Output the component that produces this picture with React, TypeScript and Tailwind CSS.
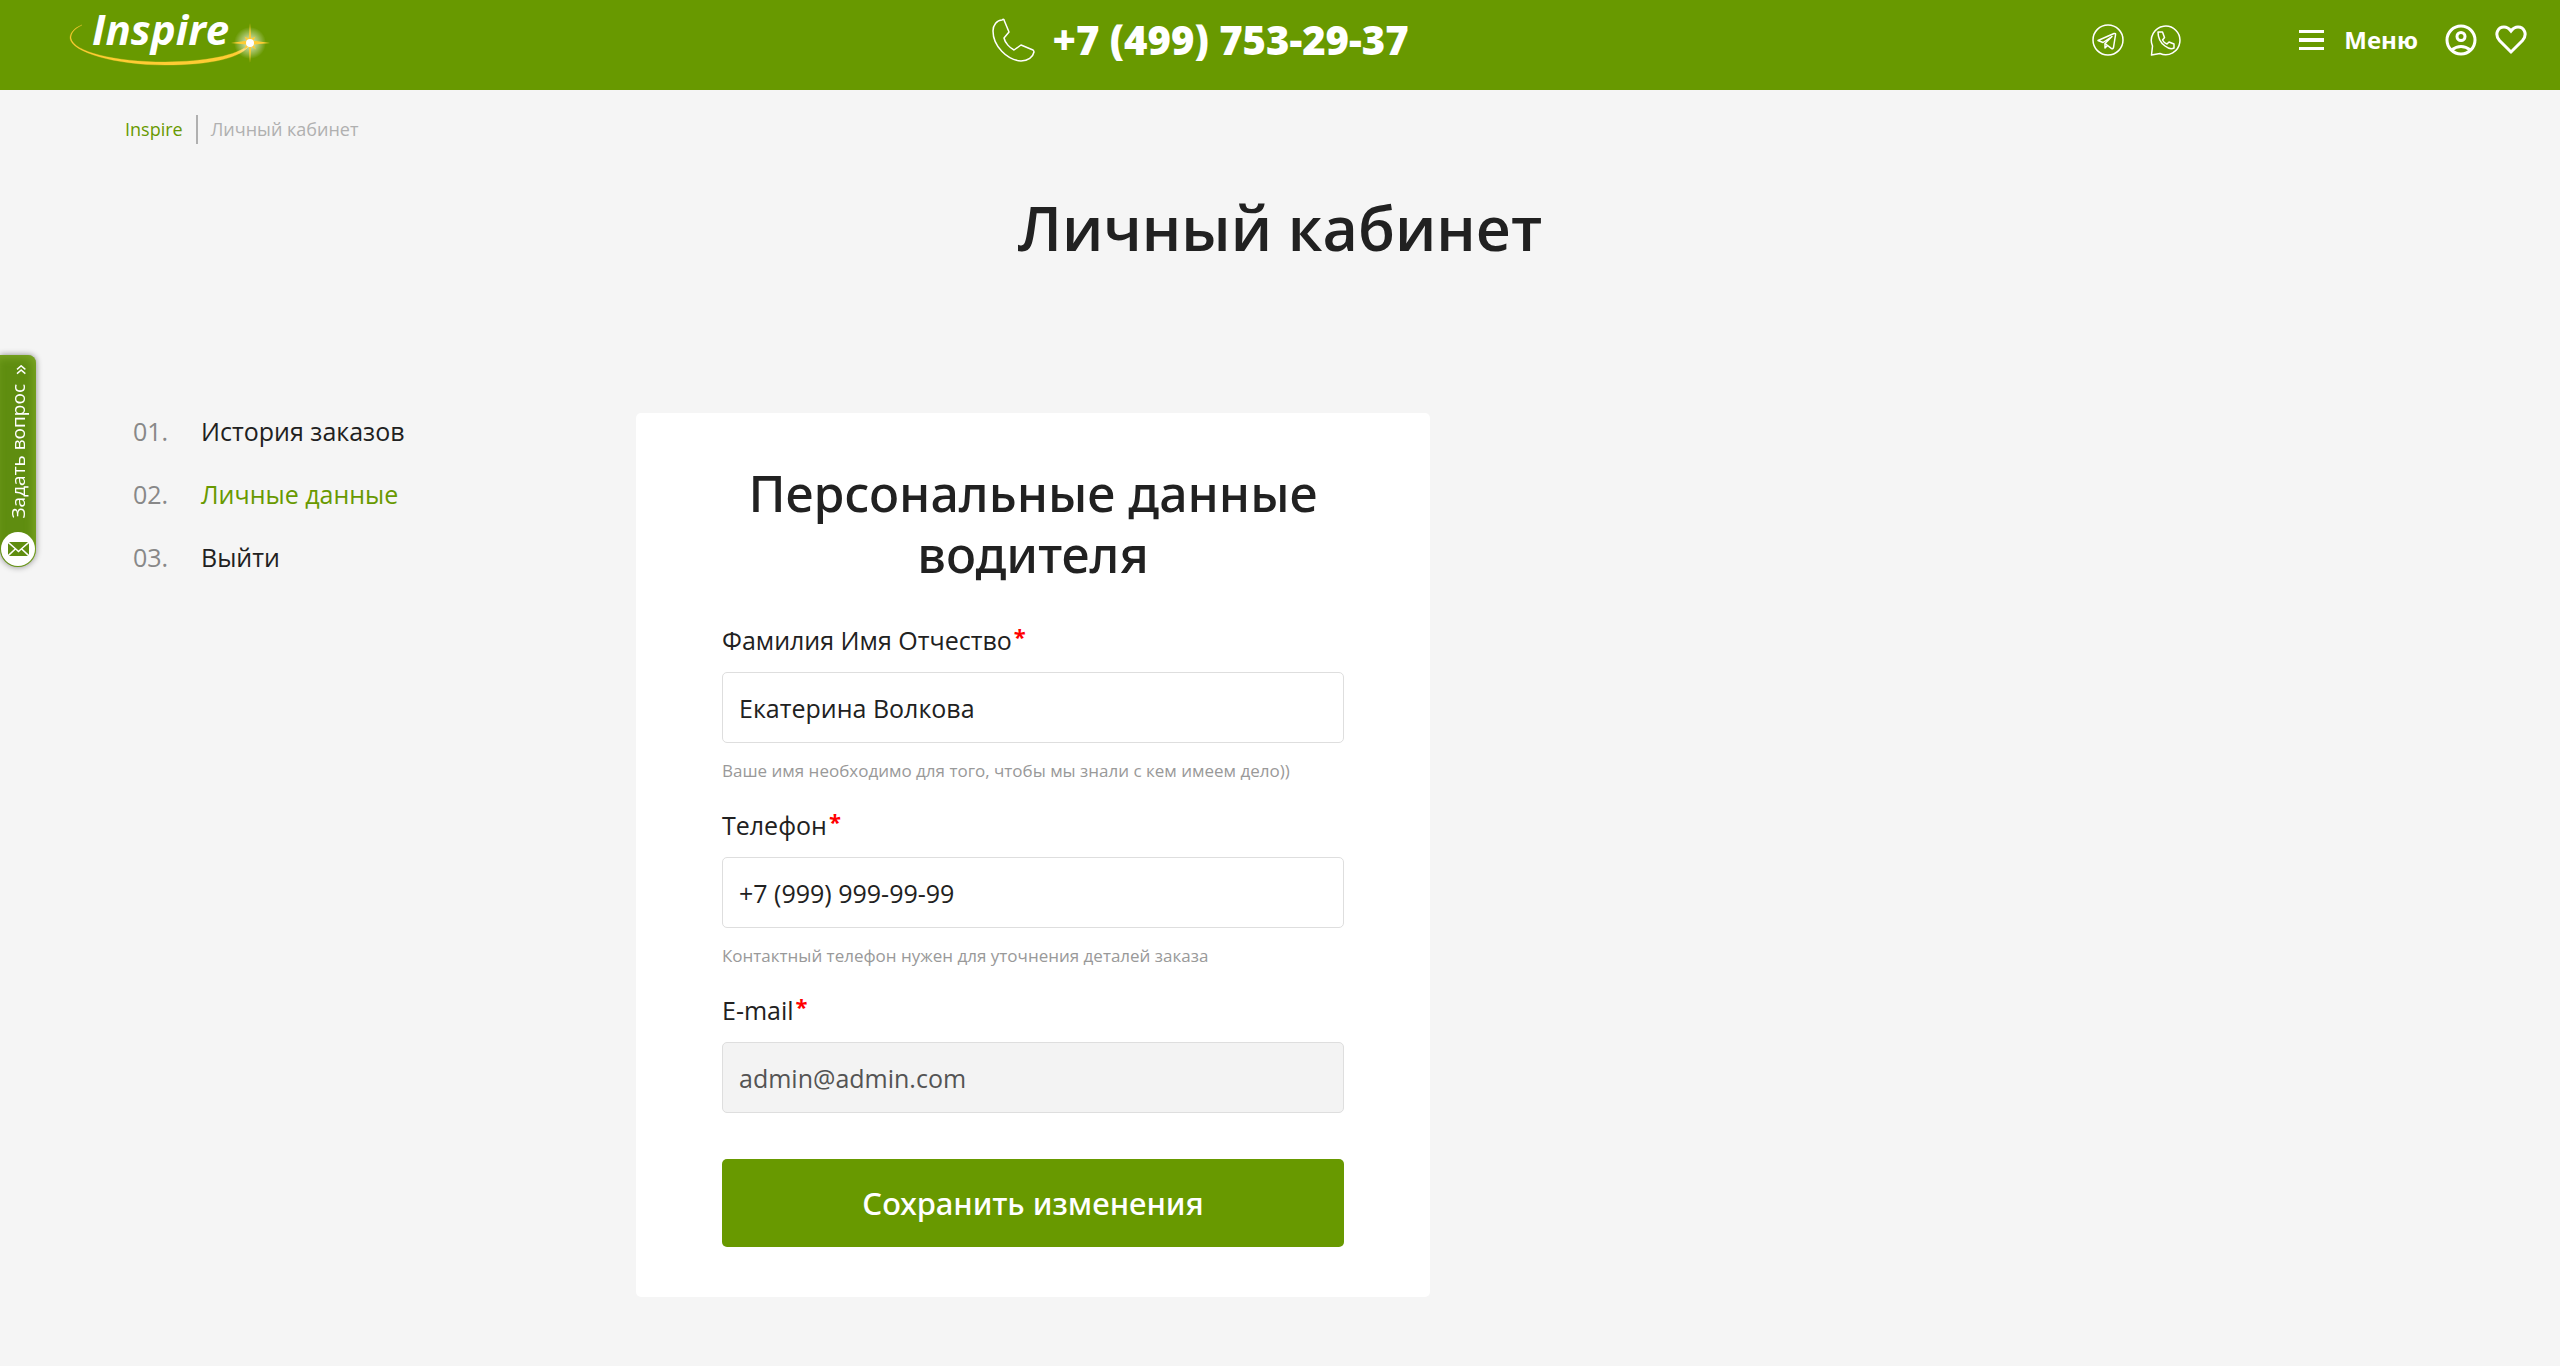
import { useState } from "react";

type MenuItem = { label: string; href: string; active?: boolean };

const menu: MenuItem[] = [
  { label: "История заказов", href: "#orders" },
  { label: "Личные данные", href: "#profile", active: true },
  { label: "Выйти", href: "#logout" },
];

export default function App() {
  return (
    <div className="min-h-screen bg-[#f5f5f5] font-['Open_Sans',sans-serif] text-[#212121]">
      <Header />
      <AskTab />

      <main className="px-[125px] pb-[68px]">
        <nav aria-label="Хлебные крошки" className="flex h-[78px] items-center text-[18px] leading-[29px]">
          <a href="#home" className="text-[#689900]">Inspire</a>
          <span className="ml-[13px] border-l-2 border-[#b0b0b0] pl-[13px] text-[#b0b0b0]">Личный кабинет</span>
        </nav>

        <h1 className="mt-[18px] text-center text-[61px] leading-[84px] font-semibold">Личный кабинет</h1>

        <div className="mt-[143px] grid grid-cols-[511fr_794fr_1005fr] items-start">
          <aside className="pl-2">
            <ol className="flex flex-col gap-[27px] text-[25px] leading-[36px]">
              {menu.map((item, i) => (
                <li key={item.href} className="flex">
                  <span className="w-[68px] text-[#888]">{`0${i + 1}.`}</span>
                  <a href={item.href} className={item.active ? "text-[#689900]" : undefined}>
                    {item.label}
                  </a>
                </li>
              ))}
            </ol>
          </aside>
          <ProfileForm />
        </div>
      </main>
    </div>
  );
}

function Header() {
  return (
    <header className="grid h-[90px] grid-cols-[960fr_415fr_1119fr] items-start bg-[#689900] px-[33px] text-white">
      <a href="#home" aria-label="Inspire" className="ml-[32px] justify-self-start">
        <Logo />
      </a>

      <a href="tel:+74997532937" className="flex h-[80px] items-center gap-4 text-[40px] font-extrabold whitespace-nowrap">
        <PhoneIcon />
        +7 (499) 753-29-37
      </a>

      <div className="flex h-[80px] items-center justify-end">
        <a href="#telegram" aria-label="Telegram"><TelegramIcon /></a>
        <a href="#whatsapp" aria-label="WhatsApp" className="ml-[26px]"><WhatsappIcon /></a>
        <button type="button" className="ml-[117px] flex items-center gap-5 text-[24px] font-bold">
          <svg width="25" height="20" viewBox="0 0 25 20" fill="currentColor">
            <path d="M0 0h25v3H0zM0 8h25v4H0zM0 17h25v3H0z" />
          </svg>
          Меню
        </button>
        <a href="#profile" aria-label="Профиль" className="ml-[27px]"><UserIcon /></a>
        <a href="#favorites" aria-label="Избранное" className="ml-[18px]"><HeartIcon /></a>
      </div>
    </header>
  );
}

function AskTab() {
  return (
    <button
      type="button"
      className="fixed top-[355px] left-0 flex h-[212px] w-[36px] flex-col items-center rounded-tr-lg rounded-b-[18px] bg-[#5f8d10] pt-[9px] pb-px text-white shadow-[0_0_6px_rgba(0,0,0,0.45),inset_-3px_3px_8px_rgba(140,180,50,0.6)]"
    >
      <span className="rotate-180 text-[22px] leading-[24px] [writing-mode:vertical-rl]">»</span>
      <span className="mt-[9px] rotate-180 text-[19px] leading-[24px] [writing-mode:vertical-rl]">Задать вопрос</span>
      <span className="mt-auto flex size-[34px] items-center justify-center rounded-full bg-white text-[#5f8d10]">
        <svg width="21" height="14" viewBox="0 0 21 14" fill="currentColor">
          <path d="M1 0h19l-9.500 8.500zM0 1.200l6.500 5.600L0 12.800zM21 1.200l-6.500 5.600 6.500 6zM7.600 7.800l2.900 2.600 2.900-2.600L20 14H1z" />
        </svg>
      </span>
    </button>
  );
}

function ProfileForm() {
  const [name, setName] = useState("Екатерина Волкова");
  const [phone, setPhone] = useState("+7 (999) 999-99-99");

  return (
    <form
      className="flex flex-col rounded-[5px] bg-white px-[86px] py-[50px]"
      onSubmit={(e) => e.preventDefault()}
    >
      <h2 className="mb-[13px] text-center font-['Noto_Sans',sans-serif] text-[50px] leading-[61px] font-medium">
        Персональные данные водителя
      </h2>

      <Field
        id="name"
        label="Фамилия Имя Отчество"
        value={name}
        onChange={setName}
        hint="Ваше имя необходимо для того, чтобы мы знали с кем имеем дело))"
      />
      <Field
        id="phone"
        label="Телефон"
        value={phone}
        onChange={setPhone}
        hint="Контактный телефон нужен для уточнения деталей заказа"
      />
      <Field id="email" label="E-mail" value="admin@admin.com" disabled />

      <button
        type="submit"
        className="mt-[46px] h-[88px] rounded-[5px] bg-[#689900] font-['Noto_Sans',sans-serif] text-[31px] font-medium text-white"
      >
        Сохранить изменения
      </button>
    </form>
  );
}

type FieldProps = {
  id: string;
  label: string;
  value: string;
  hint?: string;
  disabled?: boolean;
  onChange?: (value: string) => void;
};

function Field({ id, label, value, hint, disabled, onChange }: FieldProps) {
  return (
    <div className="flex flex-col pt-[24px]">
      <label htmlFor={id} className="flex items-start gap-[2px] text-[25px] leading-[36px]">
        {label}
        <span className="text-[22px] leading-[28px] font-bold text-[#f00]">*</span>
      </label>
      <input
        id={id}
        value={value}
        disabled={disabled}
        onChange={(e) => onChange?.(e.target.value)}
        className="mt-[14px] h-[71px] w-full rounded-[5px] border border-[#dedede] bg-white px-4 text-[25px] disabled:bg-[#f3f3f3] disabled:text-[#545454]"
      />
      {hint && <p className="mt-[16px] text-[17px] leading-[24px] text-[#999]">{hint}</p>}
    </div>
  );
}

function Logo() {
  return (
    <svg width="210" height="75" viewBox="0 0 210 75">
      <defs>
        <radialGradient id="glow">
          <stop offset="0" stopColor="#fff" />
          <stop offset="0.300" stopColor="#fff" stopOpacity="0.600" />
          <stop offset="1" stopColor="#fff" stopOpacity="0" />
        </radialGradient>
      </defs>
      <text x="27" y="45" fill="#fff" className="font-['Open_Sans',sans-serif] text-[42px] font-bold italic">
        Inspire
      </text>
      <path
        d="M17 25C9 28 5 33 5 38C6 52 50 65 100 65C145 65 178 58 185 44C172 56 140 61.500 100 62C50 62 8 52 6 38C6 33 9 29 17 25Z"
        fill="#ffcc33"
        stroke="#ffcc33"
        strokeWidth="0.300"
      />
      <circle cx="185" cy="43" r="16" fill="url(#glow)" />
      <path
        d="M185 23l1.200 15.500 4.300-2-2 4.300 16.500 2.200-16.500 1.500 2.500 5-4.800-3L185 63l-1.200-16.500-4.800 3 2.500-5L166 43l15.500-2.200-2-4.300 4.300 2z"
        fill="#ffcc33"
      />
      <circle cx="185" cy="43" r="4" fill="#fff" />
    </svg>
  );
}

function PhoneIcon() {
  return (
    <svg className="shrink-0" width="44" height="44" viewBox="0 0 44 44" fill="none" stroke="currentColor" strokeWidth="1.500" strokeLinejoin="round">
      <path d="M10 2C5 2 1 7 1 13C1 28 15 42 29 43C36 43 41 39 42 34C42 33 42 33 41 32L29 27L22 32C18 30 13 25 12 20L17 14L12 2C12 1 11 1 10 2Z" />
    </svg>
  );
}

function TelegramIcon() {
  return (
    <svg width="32" height="32" viewBox="0 0 32 32" fill="none" stroke="currentColor" strokeWidth="1.500" strokeLinejoin="round">
      <circle cx="16" cy="16" r="15" />
      <path d="M6 16.500L22 9.500Q24 9 23.500 11L21.500 23.500Q21 25.500 19.300 24.300L13 19.500L20 12.500L11 18.500Z" />
      <path d="M13 19.500V24L15.500 21.500" />
    </svg>
  );
}

function WhatsappIcon() {
  return (
    <svg width="32" height="32" viewBox="0 0 32 32" fill="none" stroke="currentColor" strokeWidth="1.500" strokeLinejoin="round">
      <path d="M1.500 31L2.500 22A14.300 14.300 0 1 1 10 29.500Z" />
      <path d="M8 8H12.500L14.500 13.500L12.500 16Q14 19 17 20L19 18L24 20V24Q20 26 15 22Q8 17 8 8Z" />
    </svg>
  );
}

function UserIcon() {
  return (
    <svg width="32" height="32" viewBox="0 0 32 32" fill="none" stroke="currentColor" strokeWidth="3">
      <circle cx="16" cy="16" r="14" />
      <circle cx="16" cy="12.500" r="4" />
      <path d="M6.500 26Q16 19 25.500 26" />
    </svg>
  );
}

function HeartIcon() {
  return (
    <svg width="32" height="30" viewBox="0 0 32 30" fill="none" stroke="currentColor" strokeWidth="3">
      <path d="M16 27L4.500 15.500C-1 9 3 2 9 2Q13 2 16 6Q19 2 23 2C29 2 33 9 27.500 15.500Z" />
    </svg>
  );
}
